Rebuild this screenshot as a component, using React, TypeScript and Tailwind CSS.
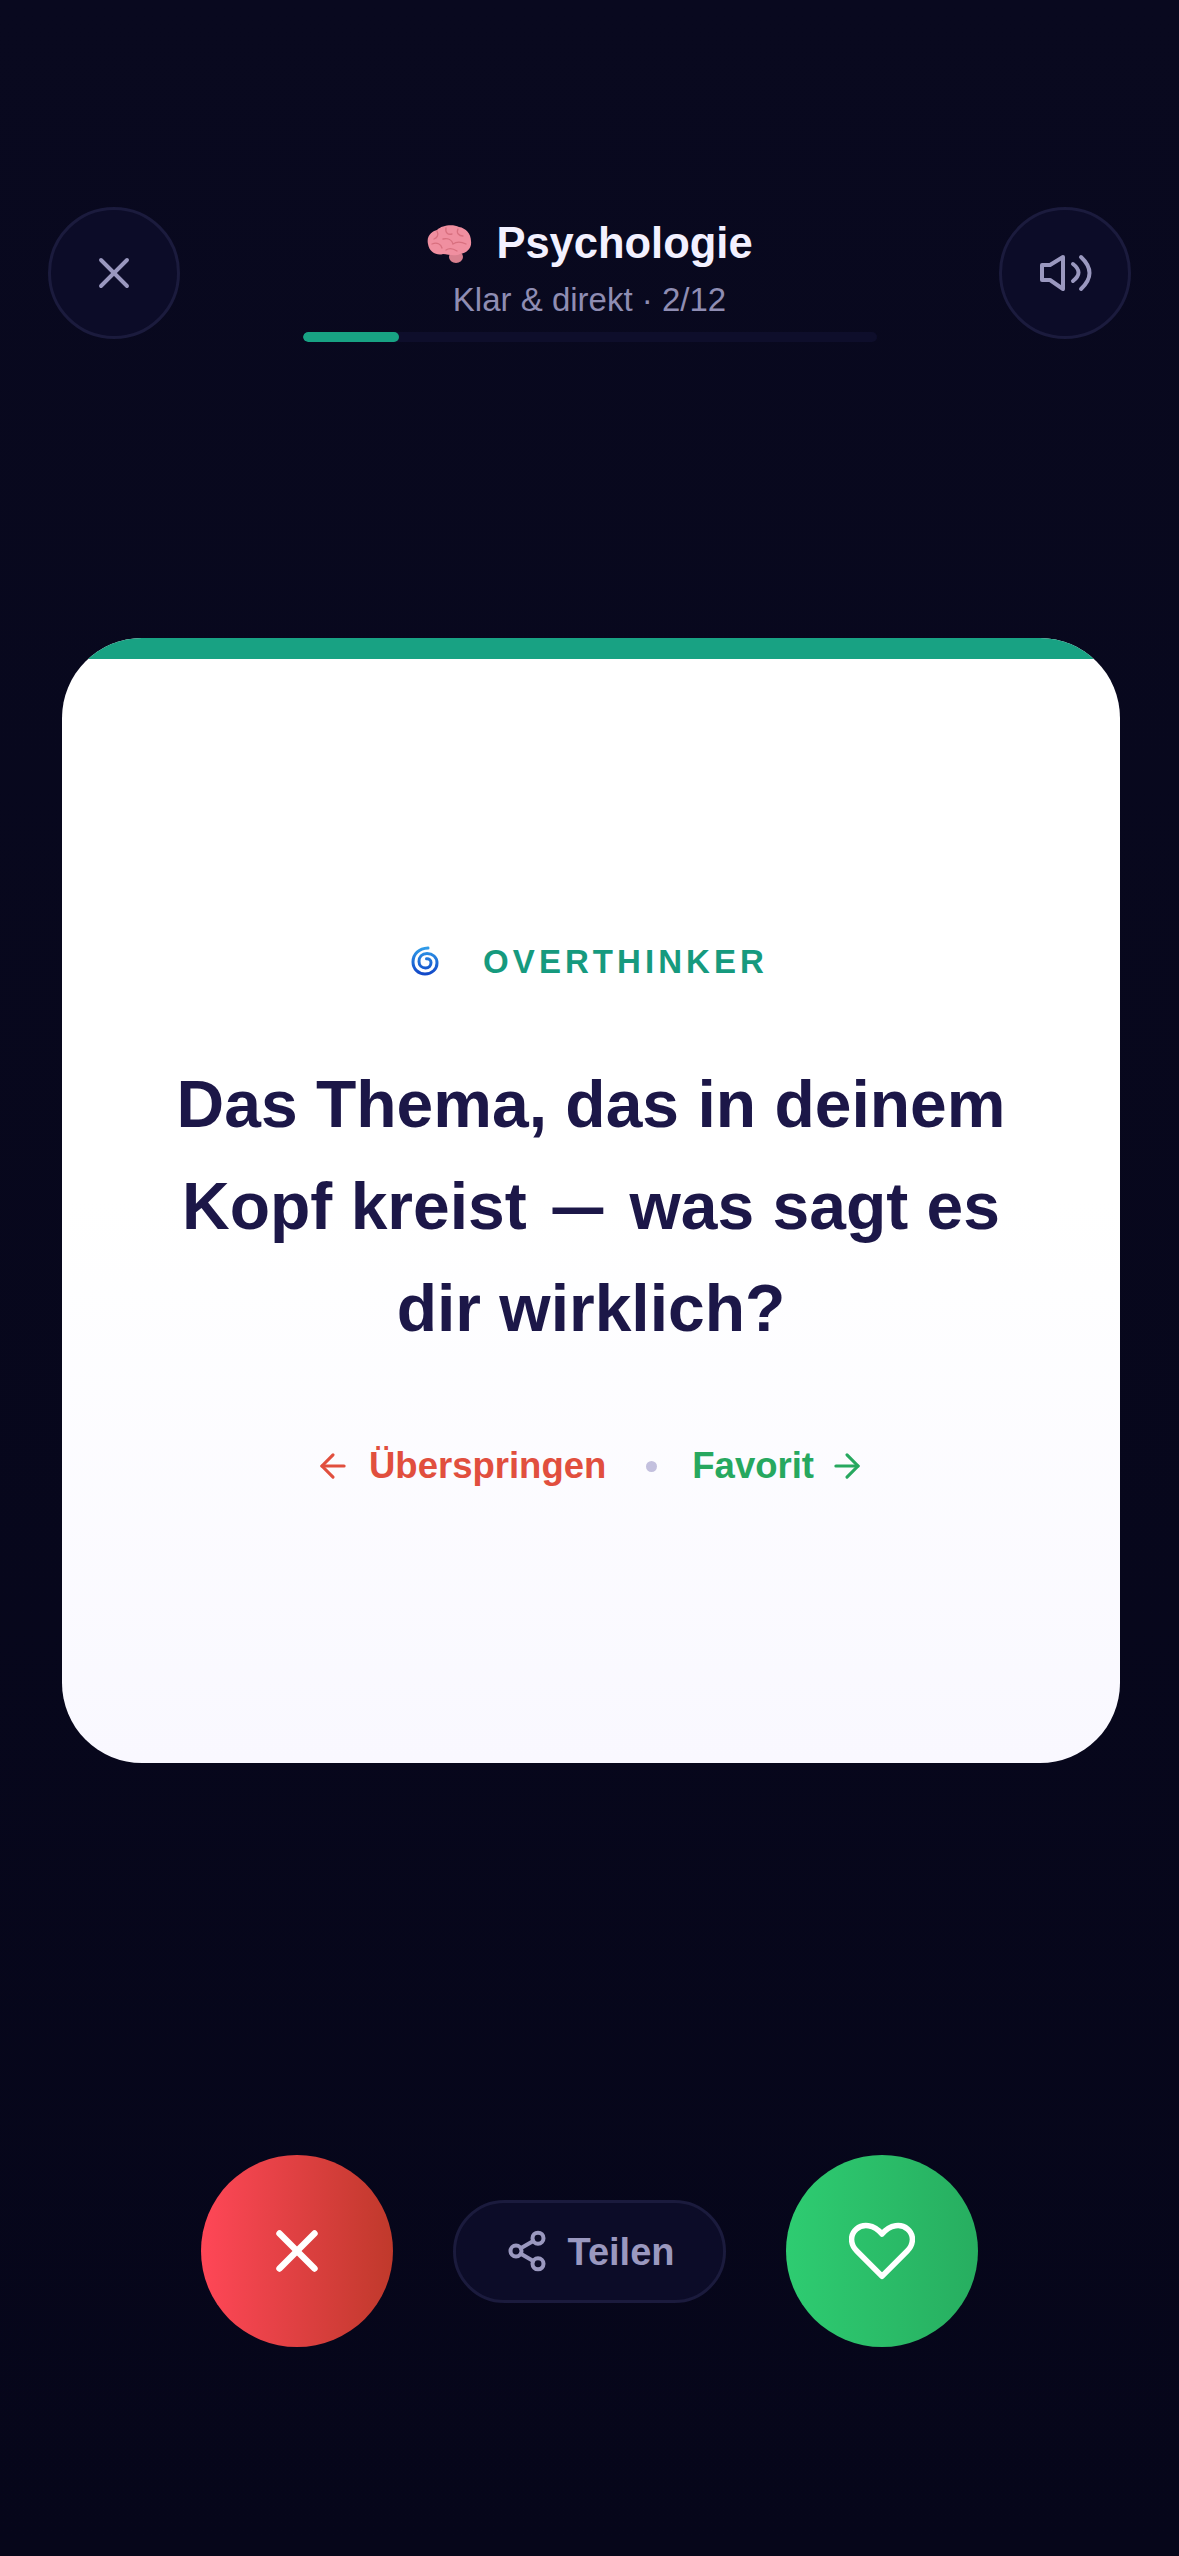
import { X, ArrowLeft, ArrowRight, Share2 } from "lucide-react"

const font = { fontFamily: '"Liberation Sans", Arial, sans-serif' }

// no emoji font in the sandbox, so the brain is drawn
function Brain() {
  return (
    <svg width="46" height="40" viewBox="0 0 46 40">
      <ellipse cx="30" cy="33" rx="7" ry="6" fill="#d9808f" />
      <path d="M2 20C0 11 7 7 11 6C16 1 27 0 33 3C40 4 45 10 45 17C46 24 41 29 34 30C28 33 22 30 17 30C11 32 3 28 2 20Z" fill="#f08fa0" />
      <g fill="none" stroke="#d8707f" strokeWidth="1.3" strokeLinecap="round">
        <path d="M11 7C13 11 11 14 8 15" />
        <path d="M20 4C19 9 22 11 26 10" />
        <path d="M32 5C30 9 33 12 37 12" />
        <path d="M6 20C11 18 15 20 16 24" />
        <path d="M17 15C22 14 26 16 27 20C31 17 36 18 40 20" />
        <path d="M20 26C24 23 28 25 31 27" />
      </g>
    </svg>
  )
}

function Spiral() {
  return (
    <svg width="28" height="30" viewBox="0 0 28 30">
      <defs>
        <linearGradient id="sp" x1="0" y1="0" x2="0" y2="1">
          <stop offset="0" stopColor="#2f9be8" />
          <stop offset="1" stopColor="#1248c8" />
        </linearGradient>
      </defs>
      <path
        d="M17 2C8 2.500 2 8 2 16C2 23 7.500 28 14 28C21 28 26 23 26 17C26 11 21.500 7.500 16 7.500C11 7.500 8 11 8 15.500C8 19.500 11 22 14.500 22C18 22 20 19.500 20 16.500C20 14 18 12.500 15.500 12.800"
        fill="none"
        stroke="url(#sp)"
        strokeWidth="3"
        strokeLinecap="round"
      />
    </svg>
  )
}

function Speaker() {
  return (
    <svg width="54" height="40" viewBox="0 0 54 40" fill="none" stroke="currentColor" strokeWidth="4" strokeLinecap="round" strokeLinejoin="round">
      <path d="M25 4L12 12H4V27H12L25 36Z" />
      <path d="M35 11Q46 19.500 35 28" />
      <path d="M43 4Q60 20 43 36" />
    </svg>
  )
}

function HeartLine() {
  return (
    <svg width="66" height="59" viewBox="0 0 72 64" fill="none" stroke="currentColor" strokeWidth="6" strokeLinejoin="round">
      <path d="M36 59L8.500 31.500C1 24 1 13.500 8 7.500C15 1.500 27 2 36 13C45 2 57 1.500 64 7.500C71 13.500 71 24 63.500 31.500Z" />
    </svg>
  )
}

export default function App() {
  return (
    <div className="min-h-[2556px] bg-gradient-to-b from-[#09091f] to-[#06061a] flex flex-col" style={font}>
      {/* Top bar */}
      <header className="flex items-start justify-between px-[48px] pt-[207px]">
        <button className="w-[132px] h-[132px] rounded-full bg-[#0c0c28] border-[3px] border-[#1b1b3d] flex items-center justify-center text-[#9a98bf]">
          <X size={52} strokeWidth={1.8} />
        </button>
        <div className="flex flex-col items-center w-[574px] h-[132px] pt-[11px]">
          <div className="flex items-center gap-[24px] h-[52px] shrink-0">
            <Brain />
            <span className="text-[43.5px] font-bold text-[#f3f1ff] leading-none">Psychologie</span>
          </div>
          <div className="text-[33px] leading-none text-[#8f8db3] mt-[13px] shrink-0">Klar &amp; direkt · 2/12</div>
          <div className="w-full h-[10px] shrink-0 rounded-full bg-[#0e0e2b] mt-[16px] overflow-hidden">
            <div className="h-full w-[96px] rounded-full bg-[#18a283]" />
          </div>
        </div>
        <button className="w-[132px] h-[132px] rounded-full bg-[#0c0c28] border-[3px] border-[#1b1b3d] flex items-center justify-center text-[#9a98bf]">
          <Speaker />
        </button>
      </header>

      {/* Card */}
      <section className="ml-[62px] mr-[59px] mt-[299px] h-[1125px] rounded-[80px] overflow-hidden bg-gradient-to-b from-white from-50% to-[#f9f8ff] flex flex-col">
        <div className="h-[21px] bg-[#18a283]" />
        <div className="flex-1 flex flex-col items-center pt-[282px]">
          <div className="flex items-center gap-[44px] h-[40px] mr-[3px]">
            <Spiral />
            <span className="text-[33px] font-bold tracking-[0.123em] text-[#169a7e] leading-none">OVERTHINKER</span>
          </div>
          <h1 className="mt-[72px] text-[66px] font-bold leading-[102px] text-[#1c1748] text-center">
            Das Thema, das in deinem
            <br />
            Kopf kreist <span className="inline-block scale-x-[0.77]">—</span> was sagt es
            <br />
            dir wirklich?
          </h1>
          <div className="mt-[88px] mr-[2px] flex items-center text-[36.5px] font-bold leading-none">
            <ArrowLeft size={38} strokeWidth={2} className="text-[#e14f3e]" />
            <span className="text-[#e14f3e] ml-[17px]">Überspringen</span>
            <span className="w-[11px] h-[11px] rounded-full bg-[#c3c0de] ml-[40px] mr-[35px]" />
            <span className="text-[#27a85f]">Favorit</span>
            <ArrowRight size={38} strokeWidth={2} className="text-[#27a85f] ml-[14px]" />
          </div>
        </div>
      </section>

      {/* Actions */}
      <footer className="mt-[392px] flex items-center justify-center gap-[60px]">
        <button className="w-[192px] h-[192px] rounded-full bg-gradient-to-r from-[#ff4757] to-[#c0392b] flex items-center justify-center text-white">
          <X size={70} strokeWidth={2.2} />
        </button>
        <button className="w-[273px] h-[103px] rounded-full bg-[#0c0c28] border-[3px] border-[#1b1b3d] flex items-center justify-center gap-[19px] text-[#9a98bf]">
          <Share2 size={44} strokeWidth={2.2} />
          <span className="text-[38px] font-bold leading-none translate-y-px">Teilen</span>
        </button>
        <button className="w-[192px] h-[192px] rounded-full bg-gradient-to-r from-[#2ecc71] to-[#27ae60] flex items-center justify-center text-white">
          <HeartLine />
        </button>
      </footer>
    </div>
  )
}
